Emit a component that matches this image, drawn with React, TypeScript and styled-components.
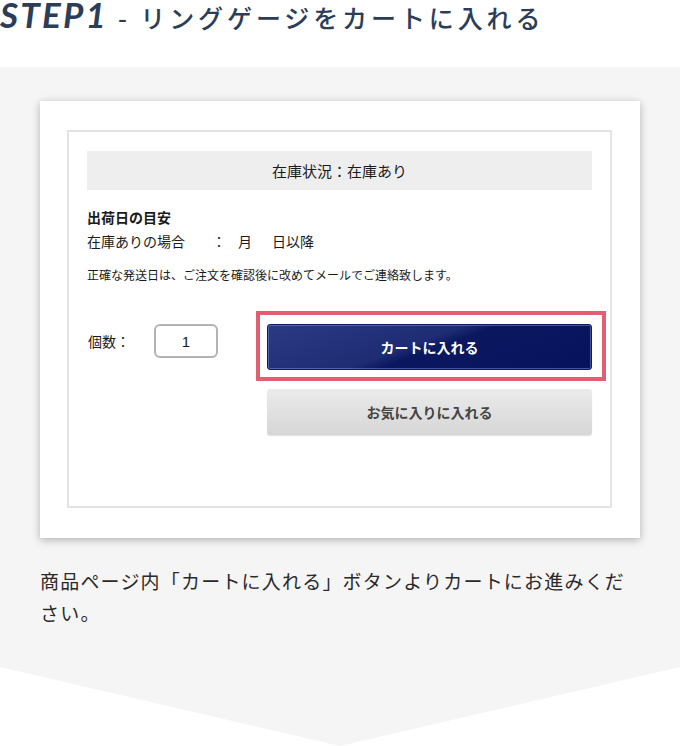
import styled, { createGlobalStyle } from 'styled-components';

const GlobalStyle = createGlobalStyle`
  html, body {
    margin: 0;
    padding: 0;
    background: #fff;
  }
  body {
    font-family: "Noto Sans CJK JP", "Noto Sans", sans-serif;
    color: #222;
  }
`;

const Page = styled.div`
  width: 680px;
`;

const Heading = styled.h2`
  margin: -3px 0 0;
  height: 70px;
  display: flex;
  align-items: baseline;
  color: #2c3d58;
  font-weight: 500;
  line-height: 1;
  white-space: nowrap;
`;

const StepLabel = styled.span`
  font-family: Lato, "Liberation Sans", sans-serif;
  font-style: italic;
  font-weight: 700;
  font-size: 35px;
  letter-spacing: 2.2px;
`;

const StepTitle = styled.span`
  font-family: "Noto Sans CJK JP", sans-serif;
  font-size: 25px;
  letter-spacing: 3.9px;
  margin-left: 10px;
`;

const Section = styled.section`
  background: #f5f5f5;
  height: 679px;
  box-sizing: border-box;
  padding: 34px 40px 0;
  clip-path: polygon(0 0, 100% 0, 100% calc(100% - 79px), 50% 100%, 0 calc(100% - 79px));
`;

const Card = styled.div`
  background: #fff;
  box-shadow: 0 2px 8px rgba(0, 0, 0, 0.28);
  padding: 29px 28px 30px 27px;
`;

const Frame = styled.div`
  border: 2px solid #e4e4e4;
  padding: 19px 18px 71px 18px;
  font-size: 14px;
  color: #1a1a1a;
`;

const StatusBar = styled.div`
  background: #eeeeee;
  height: 39px;
  display: flex;
  align-items: center;
  justify-content: center;
  font-size: 15px;
`;

const Estimate = styled.div`
  margin-top: 15px;
  line-height: 24px;
`;

const EstimateTitle = styled.div`
  font-weight: 700;
`;

const Gap = styled.span<{ $w: number }>`
  display: inline-block;
  width: ${(p) => p.$w}px;
`;

const Note = styled.p`
  margin: 13px 0 0;
  font-size: 12px;
  line-height: 18px;
`;

const OrderRow = styled.div`
  margin-top: 40px;
  display: grid;
  grid-template-columns: 180px 1fr;
`;

const Quantity = styled.div`
  display: flex;
  align-items: center;
  height: 34px;
`;

const QtyLabel = styled.span`
  width: 66px;
  padding-left: 1px;
`;

const QtyInput = styled.div`
  width: 60px;
  height: 30px;
  border: 2px solid #b3b3b3;
  border-radius: 6px;
  display: flex;
  align-items: center;
  justify-content: center;
  font-family: "Liberation Sans", sans-serif;
  font-size: 15px;
`;

const Buttons = styled.div`
  display: flex;
  flex-direction: column;
  gap: 19px;
`;

const CartWrap = styled.div`
  position: relative;
`;

const Highlight = styled.div`
  position: absolute;
  left: -11px;
  right: -14px;
  top: -13px;
  bottom: -11px;
  border: 4px solid #e05f70;
  pointer-events: none;
`;

const Button = styled.button<{ $primary?: boolean }>`
  display: flex;
  align-items: center;
  justify-content: center;
  width: 100%;
  height: 46px;
  border-radius: 3px;
  font-family: "Noto Sans CJK JP", sans-serif;
  font-size: 14px;
  font-weight: 700;
  cursor: pointer;
  ${(p) =>
    p.$primary
      ? `
    color: #fff;
    border: 1px solid #0d1a5e;
    background: linear-gradient(160deg, #2c3a84 0%, #1e2c74 45%, #0b175f 52%, #06125c 100%);
    box-shadow: inset 0 0 0 1px rgba(140, 160, 230, 0.45);
  `
      : `
    color: #444;
    border: none;
    background: linear-gradient(180deg, #ebebeb 0%, #d6d6d6 100%);
    box-shadow: 0 1px 1px rgba(0, 0, 0, 0.12);
  `}
`;

const Description = styled.p`
  margin: 27px 0 0;
  font-size: 19px;
  line-height: 32px;
  color: #2a2a2a;
  letter-spacing: 1.2px;
`;

export default function App() {
  return (
    <Page>
      <GlobalStyle />
      <Heading>
        <StepLabel>STEP1</StepLabel>
        <StepTitle>- リングゲージをカートに入れる</StepTitle>
      </Heading>
      <Section>
        <Card>
          <Frame>
            <StatusBar>在庫状況：在庫あり</StatusBar>
            <Estimate>
              <EstimateTitle>出荷日の目安</EstimateTitle>
              <div>
                在庫ありの場合<Gap $w={27} />：<Gap $w={12} />月<Gap $w={20} />日以降
              </div>
            </Estimate>
            <Note>正確な発送日は、ご注文を確認後に改めてメールでご連絡致します。</Note>
            <OrderRow>
              <Quantity>
                <QtyLabel>個数：</QtyLabel>
                <QtyInput>1</QtyInput>
              </Quantity>
              <Buttons>
                <CartWrap>
                  <Button $primary>カートに入れる</Button>
                  <Highlight />
                </CartWrap>
                <Button>お気に入りに入れる</Button>
              </Buttons>
            </OrderRow>
          </Frame>
        </Card>
        <Description>
          商品ページ内「カートに入れる」ボタンよりカートにお進みください。
        </Description>
      </Section>
    </Page>
  );
}
